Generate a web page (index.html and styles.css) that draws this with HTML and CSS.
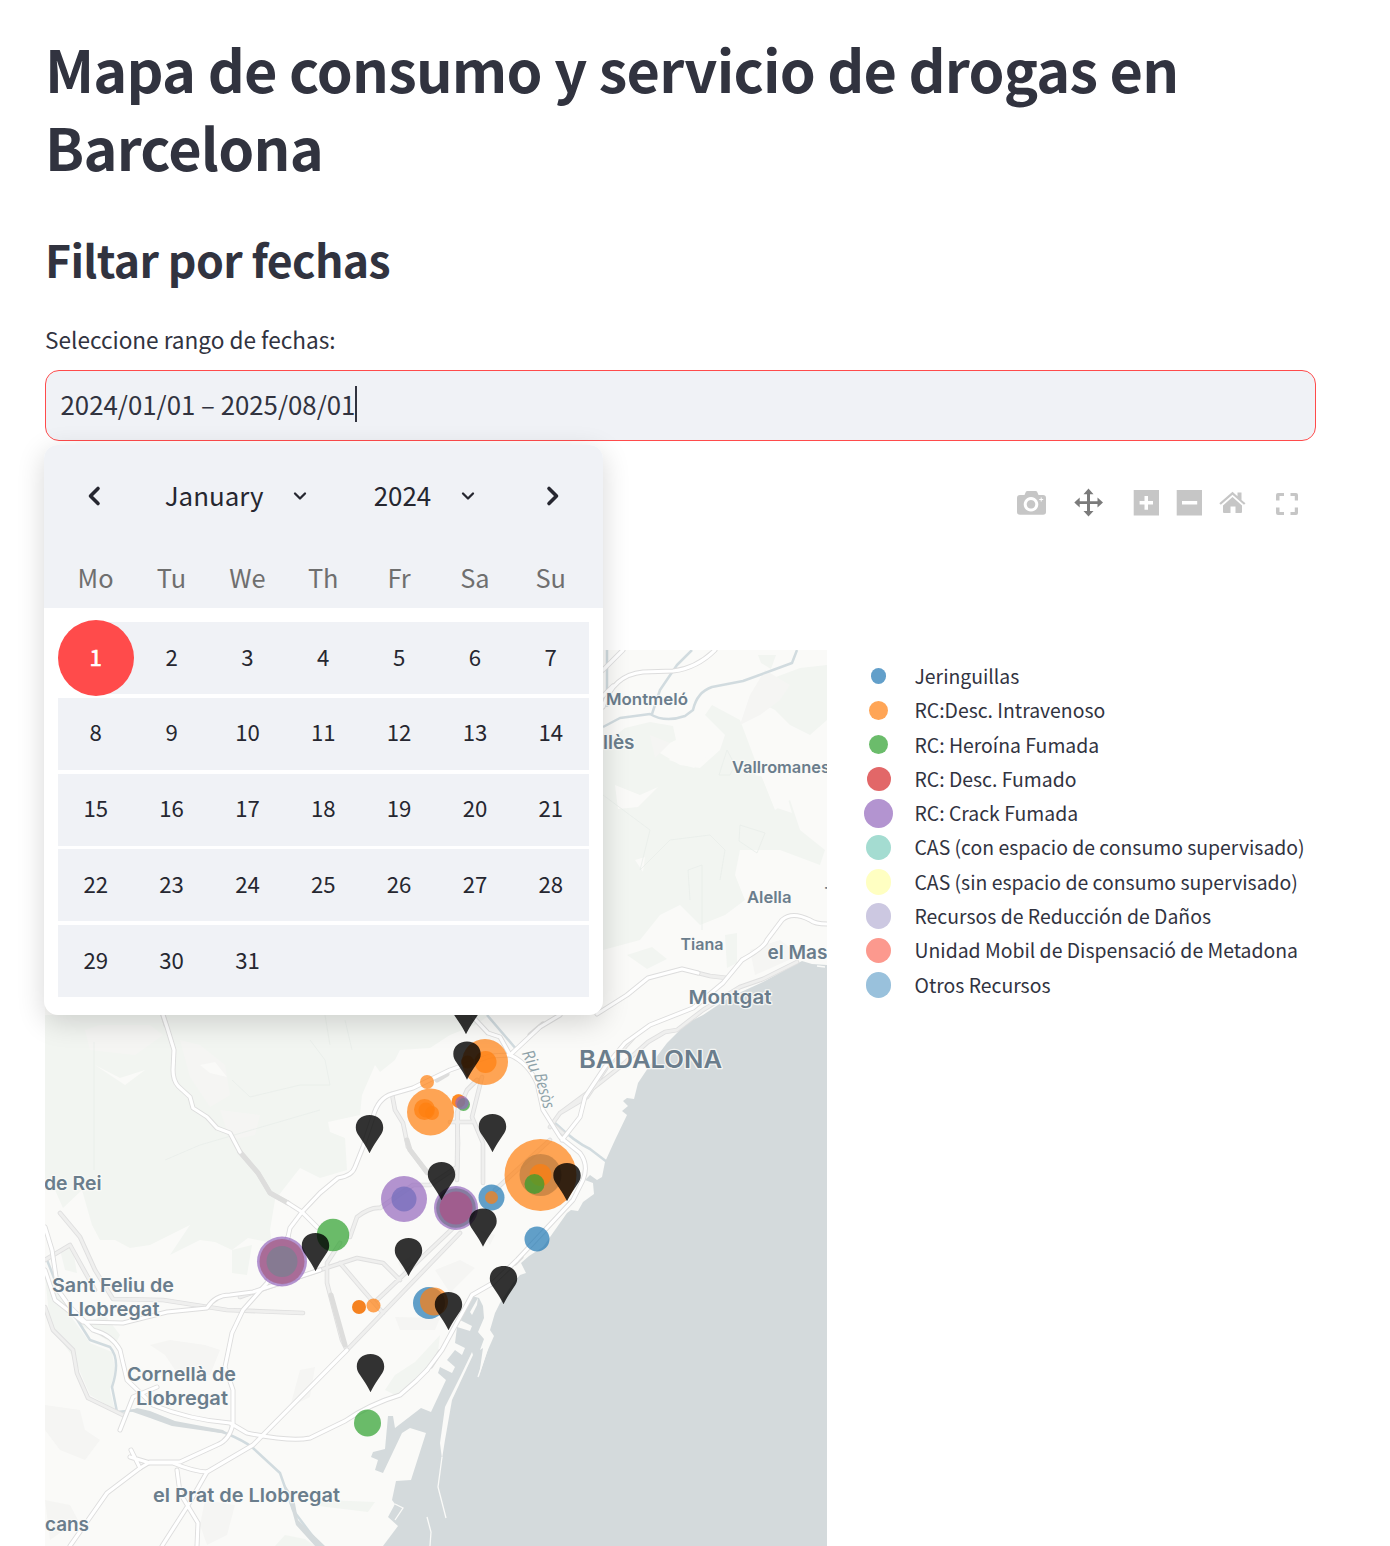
FILE: index.html
```html
<!DOCTYPE html>
<html lang="es">
<head>
<meta charset="utf-8">
<title>Mapa de consumo y servicio de drogas en Barcelona</title>
<link rel="stylesheet" href="styles.css">
</head>
<body>
<main class="page">
  <h1 class="title">Mapa de consumo y servicio de drogas en Barcelona</h1>
  <h2 class="subtitle">Filtar por fechas</h2>
  <label class="label">Seleccione rango de fechas:</label>
  <div class="field">
    <div class="date-input"><span class="date-value">2024/01/01 – 2025/08/01</span><span class="caret"></span></div>
    <div class="calendar">
      <div class="cal-head">
        <div class="cal-nav">
          <svg class="arrow" viewBox="0 0 20 24"><path d="M14 4.5 6.500 12 14 19.500"/></svg>
          <span class="month">January</span>
          <svg class="drop" viewBox="0 0 16 12"><path d="M3 3.500 8 8.500 13 3.500"/></svg>
          <span class="year">2024</span>
          <svg class="drop" viewBox="0 0 16 12"><path d="M3 3.500 8 8.500 13 3.500"/></svg>
          <svg class="arrow next" viewBox="0 0 20 24"><path d="M6 4.500 13.500 12 6 19.500"/></svg>
        </div>
        <div class="weekdays"><span>Mo</span><span>Tu</span><span>We</span><span>Th</span><span>Fr</span><span>Sa</span><span>Su</span></div>
      </div>
      <div class="days">
        <span class="selected"><b>1</b></span><span>2</span><span>3</span><span>4</span><span>5</span><span>6</span><span>7</span>
        <span>8</span><span>9</span><span>10</span><span>11</span><span>12</span><span>13</span><span>14</span>
        <span>15</span><span>16</span><span>17</span><span>18</span><span>19</span><span>20</span><span>21</span>
        <span>22</span><span>23</span><span>24</span><span>25</span><span>26</span><span>27</span><span>28</span>
        <span>29</span><span>30</span><span>31</span><span></span><span></span><span></span><span></span>
      </div>
    </div>
  </div>

  <div class="modebar">
    <svg viewBox="0 0 30 28"><path fill-rule="evenodd" d="M4 6h4.500l1.500-3.500q.5-.5 1.500-.5h8q1 0 1.500.5L22.500 6H27q3 0 3 3v14q0 2.800-3 2.800H4q-3 0-3-2.800V9q0-3 3-3zm11 2a7.300 7.300 0 1 0 .01 0zm0 3a4.300 4.300 0 1 1-.01 0zM24.700 10v-1.500h1v1.500h1.500v1h-1.500v1.500h-1V11h-1.500v-1z"/></svg>
    <svg class="active" viewBox="0 0 30 28"><path d="M14.500-.5 19.500 5.200H16v7h7.500V8.500L29 13.500l-5.500 5V15H16v7h3.500l-5 5.500-5-5.500H13v-7H5.700v3.500L.3 13.500l5.400-5v3.700H13v-7H9.500z"/></svg>
    <svg class="zoom-in" viewBox="0 0 30 28"><path fill-rule="evenodd" d="M2.700 1h25.300v25.500H2.700zM13.500 7v5H8.600v3.500h4.900v5.200H17v-5.200h5V12h-5V7z"/></svg>
    <svg class="zoom-out" viewBox="0 0 30 28"><path fill-rule="evenodd" d="M2.700 1h25.300v25.500H2.700zM8 12v3.500h15.200V12z"/></svg>
    <svg class="home" viewBox="0 0 30 28"><path d="M6 16.500 15.500 8l9.500 8.500V23q0 1-1 1h-5.500v-6.500h-5V24H7q-1 0-1-1zM2.300 14.200 15.500 2.700l5 4.500V3.500h4v7.400l4 3.300-1.500 1.600L15.500 5.700 3.800 15.800z"/></svg>
    <svg class="full" viewBox="0 0 30 28"><path d="M4 11.500V6q0-2 2-2h6v3H7.500v4.500zM18.500 4H24q2 0 2 2v5.500h-3.200V7h-4.300zM4 18.500h3.500V23H12v3H6q-2 0-2-2zm18.800 0H26V24q0 2-2 2h-5.500v-3h4.300z"/></svg>
  </div>

  <div class="chart">
    <svg class="map" viewBox="45 650 782 896">
      <defs>
        <path id="pin" d="M0 38.200C-1.500 35-3 32.500-5.500 28.500L-10.500 21C-12.500 18-13.700 16-13.700 12.500-13.700 5-8 0 0 0S13.700 5 13.700 12.500C13.700 16 12.500 18 10.500 21L5.500 28.500C3 32.500 1.500 35 0 38.200z"/>
        <g id="roads">
          <path d="M163 1015 167 1027 174 1050 173 1070Q173 1080 178 1086L190 1097 193 1108 207 1117 217 1128 230 1133 240 1152"/>
          <path d="M288 1237 290 1228 302 1212 320 1193 338 1178Q352 1176 355 1167L363 1147 373 1117Q378 1098 392 1094L413 1088 450 1070 490 1056 510 1055 540 1027 560 1015"/>
          <path d="M288 1203 302 1212 317 1227M288 1237 267 1283 243 1310 232 1333 225 1367 233 1390V1423Q230 1440 217 1445L180 1462 150 1462 140 1468 107 1493 70 1546"/>
          <path d="M473 1017 488 1033 500 1037 510 1055Q528 1063 537 1083L543 1110 560 1137 580 1153Q589 1165 583 1180L573 1200 517 1260 493 1283 472 1295 442 1350 427 1370"/>
          <path d="M427 1370 416 1381 400 1395Q370 1404 345 1421L310 1438Q290 1442 247 1433L230 1423Q190 1420 153 1405L127 1380 120 1350Q112 1335 93 1330L70 1307 58 1290 52 1250 45 1227"/>
          <path d="M45 1270 55 1300 83 1322 123 1323 167 1312 207 1308Q215 1295 230 1295L253 1292 320 1270"/>
          <path d="M157 1387 133 1397 120 1430M131 1450 140 1468M130 1457 150 1463 173 1463Q195 1472 207 1472L253 1445 347 1350"/>
          <path d="M207 1472 187 1507 162 1546M177 1470 180 1493 198 1523 197 1546"/>
          <path d="M562 1140 580 1117 585 1097 605 1067 625 1043 650 1025 693 1008 723 983 742 960Q765 947 767 940L782 920Q792 911 810 920 815 924 827 924M597 1014 627 995 648 978 682 969 698 973M603 670 623 650M603 707Q613 675 643 672L673 671Q697 668 715 650M603 696 613 686"/>
        </g>
        <g id="streets">
          <path d="M240 1152 258 1173 270 1193 288 1203M392 1094 395 1110 403 1123 408 1147 427 1173M240 1297 260 1290 320 1270 357 1258 383 1263 400 1280M340 1263 363 1290 383 1313M340 1243 327 1263V1283L342 1340 347 1350M460 1233 347 1350M377 1300 470 1212M350 1237 357 1217Q370 1207 380 1208L413 1185H430L457 1167 458 1100"/>
          <path d="M60 1213 80 1237 95 1270 113 1299 163 1300 227 1310 303 1313M45 1260 70 1245 95 1290M45 1307 53 1330 73 1350 77 1373 88 1398 123 1415"/>
          <path d="M477 1080 467 1090 457 1113 458 1143 457 1180M482 1077 472 1117 483 1143V1183M450 1122H472M550 1127 560 1113 587 1097 607 1067 633 1038M560 1113 587 1093 620 1067 648 1042 665 1032 677 1030 703 1010 740 987 763 979 797 962M698 973 710 976 727 978M552 1124 565 1135M495 1190 550 1140"/>
        </g>
      </defs>
      <rect class="land" x="45" y="650" width="782" height="896"/>
      <g class="green">
        <path d="M45 1015H490L475 1025 450 1035 430 1048 400 1050 395 1060 380 1072 375 1065 362 1095 360 1115 328 1122 330 1132 345 1138 347 1170 320 1178 300 1168 275 1200 270 1230 272 1243 248 1238 232 1250 215 1242 200 1240 170 1255 190 1225 150 1245 130 1248 115 1240 100 1240 92 1225 82 1190 63 1208 55 1190 45 1190z"/>
        <path d="M603 745 625 728 650 722 673 726 676 740 655 750 680 765 700 768 720 750 725 735 705 715 712 705 740 720 755 760 775 810 790 800 800 830 825 850 820 865 780 850 740 850 735 875 745 900 725 915 700 925 680 905 660 915 640 940 603 950z"/>
        <path d="M755 700 768 680 800 668 827 665V720L810 735 790 725 775 710zM758 655h18l-5 14-10-6zM725 935l12-2v30l-10 5zM627 955l25-8 15 12-20 10zM603 900l20 5 5 30-25 15z"/>
        <path d="M45 1275 60 1290 70 1315 90 1343 112 1352 115 1370 110 1390 115 1410 90 1395 75 1360 50 1325zM80 1325 105 1315 120 1335 115 1345 95 1333zM60 1250l12-5 5 28-12-3zM232 1250l20-5-5 30-15-2zM385 1390 395 1375 415 1362 440 1335 437 1360 410 1385 395 1395zM325 1500 375 1502 368 1512 310 1505zM285 1535l20 4 10 7h-40z"/>
      </g>
      <g class="urban">
        <path d="M150 1345 170 1340 205 1345 220 1350 210 1375 175 1370 165 1355zM300 1370l15-3-5 30-20 10zM205 1500l30 5-8 30-20 10-7-20zM45 1500 70 1505 78 1520 50 1540zM395 1317 440 1318 435 1330 400 1330zM435 1270l25-10 15 8-25 25zM85 1030 100 1025 150 1025 163 1035 135 1055 90 1050zM180 1040l20 5 25 20 5 30-20 12-20-30zM650 735l20 8-15 15zM765 670l25 15-10 15-20 15-20 10 10-30zM750 950l30-10 20 15-45 20zM220 1110l40 5-5 20-25 5zM480 1230l15 5-5 10zM398 1262l12-5 5 10-12 6z"/>
        <path d="M45 1405 80 1410 85 1430 100 1440 85 1460 60 1450 45 1430z"/>
      </g>
      <path class="clearing" d="M682 745l25-7 7 12-20 18-25-8zM755 775l15 3 7 30 15 5-10-35-20-12zM95 1065 125 1085 145 1070 120 1078zM635 860l10-3-2 15zM615 785l25 10 18-8-20 20-20 2zM200 1065l15-3 12 15-17-4z"/>
      <path class="contour" d="M603 795 650 830 640 870 670 840 710 835 725 850 720 880M690 900 688 870 702 865V930M94 1042V1170M165 1160 200 1145 320 1110M232 1080 250 1097 300 1085 330 1085 325 1060 310 1040M325 1015 330 1045M345 1020 352 1050M730 775l5-10-8-15-8 25zM740 825l25 8-8 20-18-12z"/>
      <g class="river">
        <path d="M607 650V707M692 650 677 665 660 690 652 714M603 727 620 718 650 714Q665 723 685 716L693 710Q697 692 712 687L743 681 773 670 792 663 797 650"/>
        <path d="M487 1015 517 1050M555 1123Q575 1142 590 1149L607 1162"/>
        <path d="M47 1260 60 1293 73 1313 90 1340 110 1347Q121 1360 112 1387L117 1412 137 1410 173 1423 223 1432Q245 1441 253 1448L280 1473 293 1510 320 1546"/>
      </g>
      <path class="sea" d="M137 1408 150 1411 175 1421 223 1430 227 1434 200 1430 172 1426 150 1418 130 1411zM285 1485 294 1498 298 1520 325 1546H315L296 1525 290 1503z"/>
      <path class="sea" d="M827 965 812 964 802 961 763 982 730 997 703 1015 687 1023 667 1043 648 1068 638 1083 634 1099 627 1098 623 1101 628 1106 622 1111 627 1115 615 1140 605 1162 602 1177 597 1180 590 1175 585 1180 593 1183 594 1194 583 1202 578 1211 571 1210 567 1213 555 1230 543 1247 529 1256 521 1263 526 1273 520 1275 513 1283 500 1303 495 1313 490 1330 494 1336 487 1352 479 1376 483 1348 480 1350 484 1339 478 1332 484 1318 483 1306 479 1298 472 1296 466 1307 460 1320 472 1326 470 1331 457 1327 455 1343 465 1348 462 1355 455 1350 447 1360 455 1367 452 1373 440 1367 438 1373 446 1380 431 1412 421 1408 395 1428 393 1416H388L385 1449 373 1452 371 1457 378 1460 375 1470 383 1473 402 1433 410 1428 426 1433 411 1480 396 1481 392 1500 395 1504 388 1517 398 1526 383 1546H827z"/>
      <path class="land" d="M472 1352 473 1355 452 1400 445 1440 442 1459 440 1443 445 1407 460 1377zM470 1312 478 1298 477 1305 472 1315z"/>
      <path class="breakwater" d="M442 1457 438 1487 446 1518M427 1517 431 1532 430 1546M487 1350 478 1377M817 966l8 1M395 1504l8 4-8 12"/>
      <use href="#streets" class="street-edge"/><use href="#streets" class="street"/>
      <path class="tunnel" d="M240 1152 258 1173 270 1193 288 1203M407 1140 410 1150 427 1172M163 1015 166 1025M431 1366 440 1352M530 1035 543 1024M437 1080 447 1074M331 1295 345 1345M515 1263 521 1257"/>
      <use href="#roads" class="road-edge"/><use href="#roads" class="road"/>

      <g class="places">
        <text x="606" y="705" textLength="82" lengthAdjust="spacingAndGlyphs">Montmeló</text>
        <text x="732" y="773" textLength="98" lengthAdjust="spacingAndGlyphs">Vallromanes</text>
        <text x="747" y="903" textLength="44.500" lengthAdjust="spacingAndGlyphs">Alella</text>
        <text x="680.500" y="949.500" textLength="43" lengthAdjust="spacingAndGlyphs">Tiana</text>
        <text x="824.500" y="899">T</text>
        <g class="town">
          <text x="603" y="749" textLength="31.500" lengthAdjust="spacingAndGlyphs">llès</text>
          <text x="767.500" y="959" textLength="60" lengthAdjust="spacingAndGlyphs">el Mas</text>
          <text x="688.500" y="1004" textLength="83" lengthAdjust="spacingAndGlyphs">Montgat</text>
          <text x="44" y="1190" textLength="57.500" lengthAdjust="spacingAndGlyphs">de Rei</text>
          <text x="52" y="1291.500" textLength="122" lengthAdjust="spacingAndGlyphs">Sant Feliu de</text>
          <text x="67.500" y="1315.500" textLength="92" lengthAdjust="spacingAndGlyphs">Llobregat</text>
          <text x="127" y="1381" textLength="109" lengthAdjust="spacingAndGlyphs">Cornellà de</text>
          <text x="136" y="1405" textLength="92" lengthAdjust="spacingAndGlyphs">Llobregat</text>
          <text x="153" y="1502" textLength="187" lengthAdjust="spacingAndGlyphs">el Prat de Llobregat</text>
          <text x="45" y="1531" textLength="44" lengthAdjust="spacingAndGlyphs">cans</text>
        </g>
        <text class="city" x="579" y="1067.500" textLength="143" lengthAdjust="spacingAndGlyphs">BADALONA</text>
        <text class="river-name" transform="translate(521.500 1053) rotate(65)" textLength="23" lengthAdjust="spacingAndGlyphs">Riu</text>
        <text class="river-name" transform="translate(534 1075) rotate(74)" textLength="36" lengthAdjust="spacingAndGlyphs">Besòs</text>
      </g>

      <g class="dots">
        <g fill="#1f77b4"><circle cx="404" cy="1199" r="12.500"/><circle cx="540.500" cy="1175" r="21"/><circle cx="491.500" cy="1197.500" r="13"/><circle cx="537" cy="1239" r="12.500"/><circle cx="429" cy="1303" r="16"/></g>
        <g fill="#ff7f0e"><circle cx="485" cy="1062" r="23"/><circle cx="485.500" cy="1062" r="11"/><circle cx="467.500" cy="1062" r="6.500"/><circle cx="427" cy="1082" r="7"/><circle cx="430.500" cy="1112" r="23.500"/><circle cx="424.500" cy="1109.500" r="10.500"/><circle cx="432" cy="1113" r="7"/><circle cx="426" cy="1110" r="7.500"/><circle cx="458.500" cy="1101" r="6.800"/><circle cx="458.500" cy="1101" r="6.800"/><circle cx="540.500" cy="1175" r="36"/><circle cx="540.500" cy="1175" r="11"/><circle cx="491.500" cy="1197.500" r="6.500"/><circle cx="434" cy="1301.500" r="14"/><circle cx="373.500" cy="1305.500" r="7"/></g>
        <circle class="solid" cx="359" cy="1307" r="7" fill="#f58220"/>
        <g fill="#2ca02c"><circle cx="463.500" cy="1104.500" r="6.500"/><circle cx="534.500" cy="1184" r="10"/><circle cx="333" cy="1235" r="16.200"/><circle cx="367.500" cy="1423" r="13.500"/></g>
        <g fill="#9467bd"><circle cx="404" cy="1199" r="23"/><circle cx="462" cy="1102.800" r="6.800"/><circle cx="456" cy="1208" r="22"/><circle cx="282" cy="1261.500" r="25"/></g>
        <g class="solid"><circle cx="456" cy="1208" r="19.800" fill="#867ca0"/><circle cx="456" cy="1208" r="16.500" fill="#a05d8e"/><circle cx="282" cy="1261.500" r="22.500" fill="#a96c97"/><circle cx="282" cy="1261.500" r="15.500" fill="#867a92"/></g>
      </g>
      <g class="pins">
        <use href="#pin" x="466" y="996"/><use href="#pin" x="467" y="1041.500"/><use href="#pin" x="369.500" y="1115"/><use href="#pin" x="492.500" y="1114"/><use href="#pin" x="441.500" y="1162"/><use href="#pin" x="567" y="1163"/><use href="#pin" x="483" y="1208.500"/><use href="#pin" x="408.500" y="1238"/><use href="#pin" x="315.500" y="1233"/><use href="#pin" x="503.500" y="1266"/><use href="#pin" x="448.500" y="1292"/><use href="#pin" x="370.500" y="1354"/>
      </g>
    </svg>
    <ul class="legend">
      <li><i class="dot jer"></i>Jeringuillas</li>
      <li><i class="dot intra"></i>RC:Desc. Intravenoso</li>
      <li><i class="dot hero"></i>RC: Heroína Fumada</li>
      <li><i class="dot desc"></i>RC: Desc. Fumado</li>
      <li><i class="dot crack"></i>RC: Crack Fumada</li>
      <li><i class="dot con"></i>CAS (con espacio de consumo supervisado)</li>
      <li><i class="dot sin"></i>CAS (sin espacio de consumo supervisado)</li>
      <li><i class="dot red"></i>Recursos de Reducción de Daños</li>
      <li><i class="dot uni"></i>Unidad Mobil de Dispensació de Metadona</li>
      <li><i class="dot otr"></i>Otros Recursos</li>
    </ul>
  </div>
</main>
</body>
</html>
```

FILE: styles.css
```css
* { box-sizing: border-box; }
body {
  margin: 0;
  height: 1546px;
  overflow: hidden;
  background: #fff;
  color: #31333f;
  font-family: "Noto Sans CJK JP", "Noto Sans", sans-serif;
}
.page { padding: 29px 74px 0 45px; }
.title { margin: 0; font-size: 57.600px; line-height: 78px; font-weight: 700; letter-spacing: -.78px; }
.subtitle { margin: 44px 0 0; font-size: 44.600px; line-height: 60px; font-weight: 700; letter-spacing: -.65px; }
.label { display: block; margin-top: 36px; font-size: 22.600px; line-height: 30px; height: 45px; }
.field { position: relative; width: 1271px; }
.date-input {
  display: flex;
  align-items: center;
  height: 71px;
  padding: 0 15px 4px 14.500px;
  border: 1px solid #ff4b4b;
  border-radius: 14px;
  background: #f0f2f6;
  font-size: 25.800px;
}
.caret { width: 2px; height: 36px; background: #31333f; }

/* Date picker popover */
.calendar {
  position: absolute;
  z-index: 2;
  left: -1.300px;
  top: 75px;
  width: 559px;
  height: 570px;
  border-radius: 14px;
  background: #fff;
  box-shadow: 0 7px 28px rgba(0, 0, 0, .16);
}
.cal-head { height: 163px; padding: 0 14px; border-radius: 14px 14px 0 0; background: #f0f2f6; }
.cal-nav { display: flex; align-items: center; height: 101px; padding-left: 26px; color: #262730; font-size: 25.900px; }
.cal-nav svg { fill: none; stroke: #262730; stroke-linecap: round; stroke-linejoin: round; }
.arrow { width: 20px; height: 24px; stroke-width: 3.600; }
.drop { width: 16px; height: 12px; stroke-width: 2.300; }
.month { width: 127px; margin-left: 61px; }
.year { width: 86px; margin-left: 66px; }
.next { margin-left: 67px; }
.month, .year { padding-bottom: 2px; }
.weekdays { display: grid; grid-template-columns: repeat(7, 1fr); height: 62px; line-height: 62px; text-align: center; color: #6f6f6f; font-size: 25.400px; }
.days { display: grid; grid-template-columns: repeat(7, 1fr); grid-auto-rows: 72px; row-gap: 3.800px; padding: 14px 14px 0; }
.days span { display: flex; align-items: center; justify-content: center; padding-bottom: 5px; background: #f0f2f6; color: #262730; font-size: 22.200px; line-height: 30px; }
.days .selected { padding: 0; background: linear-gradient(90deg, #fff 50%, #f0f2f6 50%); }
.selected b { display: flex; flex: none; align-items: center; justify-content: center; width: 76px; height: 76px; padding-bottom: 5px; border-radius: 50%; background: #ff4b4b; color: #fff; font-weight: 400; -webkit-text-stroke: .7px #fff; }

/* Chart toolbar */
.modebar { display: flex; height: 28px; margin: 48px 0 0 971px; }
.modebar svg { width: 30px; height: 28px; fill: #c6c6c6; overflow: visible; }
.modebar .active { margin-left: 28px; fill: #7b7b7b; }
.modebar .zoom-in { margin-left: 27px; }
.modebar .zoom-out, .modebar .home { margin-left: 13px; }
.modebar .full { margin-left: 25px; }

/* Map and legend */
.chart { display: flex; margin-top: 133px; width: 1345px; }
.map { flex: none; display: block; width: 782px; height: 896px; overflow: hidden; }
.land { fill: #fafaf8; }
.green { fill: #f2f5f1; }
.urban { fill: #f5f5f3; }
.clearing { fill: #fafaf8; }
.contour { fill: none; stroke: #e9eeea; stroke-width: .8; }
.sea { fill: #d4dadc; }
.river { fill: none; stroke: #d1dbdf; stroke-width: 2.500; stroke-linejoin: round; }
.breakwater { fill: none; stroke: #fafaf8; stroke-width: 1.300; }
.street-edge, .street, .road-edge, .road, .tunnel { fill: none; stroke-linejoin: round; stroke-linecap: round; }
.street-edge { stroke: #dfdfdf; stroke-width: 4.600; }
.street { stroke: #efefee; stroke-width: 2.800; }
.tunnel { stroke: #dddddc; stroke-width: 5; }
.road-edge { stroke: #dddddd; stroke-width: 5; }
.road { stroke: #fff; stroke-width: 3.200; }
.places { fill: #6a7d8c; font-family: Inter, "Open Sans", sans-serif; font-weight: 600; font-size: 16.300px; paint-order: stroke; stroke: rgba(250, 250, 248, .85); stroke-width: 2.500px; stroke-linejoin: round; }
.town { font-size: 19px; }
.city { font-size: 24.300px; }
.river-name { fill: #8ea2a9; font-family: "Open Sans", sans-serif; font-size: 17px; font-style: italic; font-weight: 400; }
.dots circle { opacity: .7; }
.dots .solid circle, .dots circle.solid { opacity: 1; }
.pins { fill: rgba(0, 0, 0, .8); }
.legend { list-style: none; margin: 9px 0 0 33px; padding: 0; font-size: 19.400px; }
.legend li { display: flex; align-items: center; height: 34.300px; line-height: 34.300px; white-space: nowrap; }
.dot { width: var(--d); height: var(--d); margin: 0 calc(36px - var(--d) / 2) 0 calc(18.500px - var(--d) / 2); border-radius: 50%; background: var(--c); }
.jer { --d: 15.500px; --c: #629fca; }
.intra { --d: 19px; --c: #ffa556; }
.hero { --d: 19px; --c: #6bbc6b; }
.desc { --d: 24px; --c: #e26768; }
.crack { --d: 29px; --c: #b394d0; }
.con { --d: 25.500px; --c: #a4dcd1; }
.sin { --d: 25.500px; --c: #ffffc2; }
.red { --d: 25.500px; --c: #ccc8e1; }
.uni { --d: 25.500px; --c: #fc998e; }
.otr { --d: 25.500px; --c: #99c1dc; }
```
